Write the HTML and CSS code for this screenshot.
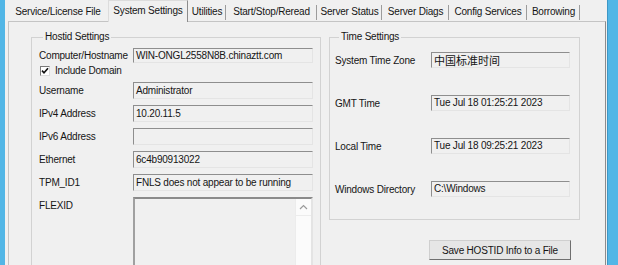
FILE: index.html
```html
<!DOCTYPE html>
<html lang="en">
<head>
  <meta charset="UTF-8">
  <title>LMTOOLS - System Settings</title>
  <link rel="stylesheet" href="styles.css">
</head>
<body>
  <div class="screen">
    <div class="edge-left"></div>

    <div class="window">
      <!-- Tab strip -->
      <div class="tabs">
        <div class="tab tab-service">Service/License File</div>
        <div class="tab tab-system active">System Settings</div>
        <div class="tab tab-utilities">Utilities</div>
        <div class="tab tab-start">Start/Stop/Reread</div>
        <div class="tab tab-status">Server Status</div>
        <div class="tab tab-diags">Server Diags</div>
        <div class="tab tab-config">Config Services</div>
        <div class="tab tab-borrow">Borrowing</div>
      </div>

      <!-- Tab page -->
      <div class="page">
        <fieldset class="group hostid">
          <legend>Hostid Settings</legend>
          <div class="field field-host">
            <span class="label">Computer/Hostname</span>
            <div class="box box-short">WIN-ONGL2558N8B.chinaztt.com</div>
          </div>
          <div class="check-row">
            <span class="checkbox">
              <svg width="8" height="8" viewBox="0 0 8 8"><path d="M1 3.6 L3 5.8 L7 1.2" fill="none" stroke="#111" stroke-width="1.6"/></svg>
            </span>
            <span>Include Domain</span>
          </div>
          <div class="field">
            <span class="label">Username</span>
            <div class="box">Administrator</div>
          </div>
          <div class="field">
            <span class="label">IPv4 Address</span>
            <div class="box">10.20.11.5</div>
          </div>
          <div class="field">
            <span class="label">IPv6 Address</span>
            <div class="box"></div>
          </div>
          <div class="field">
            <span class="label">Ethernet</span>
            <div class="box">6c4b90913022</div>
          </div>
          <div class="field">
            <span class="label">TPM_ID1</span>
            <div class="box">FNLS does not appear to be running</div>
          </div>
          <div class="field field-area">
            <span class="label">FLEXID</span>
            <div class="area">
              <div class="scrollbar">
                <div class="scroll-up">
                  <svg width="9" height="6" viewBox="0 0 9 6"><path d="M1 5 L4.5 1.5 L8 5" fill="none" stroke="#9a9a9a" stroke-width="1.2"/></svg>
                </div>
              </div>
            </div>
          </div>
        </fieldset>

        <div class="right-col">
          <fieldset class="group time">
            <legend>Time Settings</legend>
            <div class="field">
              <span class="label">System Time Zone</span>
              <div class="box cjk">中国标准时间</div>
            </div>
            <div class="field">
              <span class="label">GMT Time</span>
              <div class="box">Tue Jul 18 01:25:21 2023</div>
            </div>
            <div class="field">
              <span class="label">Local Time</span>
              <div class="box">Tue Jul 18 09:25:21 2023</div>
            </div>
            <div class="field">
              <span class="label">Windows Directory</span>
              <div class="box">C:\Windows</div>
            </div>
          </fieldset>
          <button class="save-btn" type="button">Save HOSTID Info to a File</button>
        </div>
      </div>
    </div>

    <div class="edge-right"></div>
  </div>
</body>
</html>
```

FILE: styles.css
```css
body {
  margin: 0;
  background: #f0f0f0;
  font-family: "Liberation Sans", Arial, sans-serif;
  font-size: 10px;
  letter-spacing: -0.2px;
  color: #151515;
}

.screen {
  display: flex;
  width: 618px;
  height: 265px;
  overflow: hidden;
}

/* Blue window frame on both sides */
.edge-left {
  width: 5px;
  background: #52b6e6;
}

.edge-right {
  flex: 1;
  background: #52b6e6;
  border-left: 1px solid #3d97c6;
}

.window {
  width: 602px;
  display: flex;
  flex-direction: column;
  background: #f0f0f0;
}

/* Tabs */
.tabs {
  display: flex;
  height: 21px;
  padding-left: 3px;
}

.tab {
  height: 21px;
  line-height: 23px;
  text-align: center;
  white-space: nowrap;
  box-sizing: border-box;
  background: linear-gradient(#9c9c9c, #9c9c9c) right 5px / 1px 15px no-repeat;
}

.tab.active {
  position: relative;
  z-index: 1;
  height: 22px;
  line-height: 19px;
  border: 1px solid;
  border-color: #dcdcdc #8c8c8c transparent #dcdcdc;
  border-bottom: none;
  background: #f0f0f0;
}

.tab-service { width: 100px; background: none; }
.tab-system { width: 80px; }
.tab-utilities { width: 38px; }
.tab-start { width: 91px; }
.tab-status { width: 65px; }
.tab-diags { width: 67px; }
.tab-config { width: 78px; }
.tab-borrow { width: 53px; }

/* Tab page */
.page {
  flex: 1;
  margin: 0 1px 0 3px;
  padding-left: 22px;
  border: 1px solid;
  border-color: #c4c4c4 #8c8c8c #8c8c8c #c4c4c4;
  display: flex;
  align-items: flex-start;
}

/* Group boxes */
.group {
  margin: 9px 0 0;
  padding: 0;
  border: 1px solid #d2d2d2;
  min-width: 0;
  box-sizing: border-box;
}

.group legend {
  margin-left: 4px;
  padding: 0 2px;
  line-height: 12px;
}

.hostid {
  width: 290px;
  height: 270px;
  padding: 0 6px 0 7px;
}

.time {
  width: 251px;
  padding: 0 8px 22px 5px;
}

.right-col {
  margin-left: 8px;
  display: flex;
  flex-direction: column;
}

.field {
  display: grid;
  align-items: center;
  margin-top: 6px;
}

.hostid .field {
  grid-template-columns: 94px 180px;
}

.time .field {
  grid-template-columns: 96px 139px;
  margin-top: 27px;
}

.time .field:first-of-type {
  margin-top: 9px;
}

.hostid .field-host {
  margin-top: 5px;
}

.label {
  white-space: nowrap;
}

/* Read-only text boxes */
.box {
  height: 17px;
  box-sizing: border-box;
  border: 1px solid;
  border-color: #8e8e8e #e4e4e4 #e4e4e4 #8e8e8e;
  background: #f0f0f0;
  padding-left: 2px;
  line-height: 15px;
  white-space: nowrap;
  overflow: hidden;
}

.time .box {
  height: 16px;
  line-height: 14px;
}

.box-short {
  height: 15px;
  line-height: 13px;
}

.cjk {
  font-family: "Noto Sans CJK SC", sans-serif;
  font-size: 11px;
  letter-spacing: 0;
}

/* Include Domain checkbox */
.check-row {
  display: flex;
  align-items: center;
  gap: 5px;
  margin: 2px 0 0 1px;
  height: 11px;
}

.checkbox {
  width: 10px;
  height: 10px;
  box-sizing: border-box;
  border: 1px solid;
  border-color: #7a7a7a #dcdcdc #dcdcdc #7a7a7a;
  background: #fff;
  display: flex;
  align-items: center;
  justify-content: center;
}

/* FLEXID multi-line box */
.field-area {
  align-items: start;
}

.field-area .label {
  padding-top: 3px;
}

.area {
  height: 120px;
  box-sizing: border-box;
  border: 2px solid;
  border-color: #8a8a8a #e4e4e4 #e4e4e4 #a0a0a0;
  background: #f0f0f0;
  display: flex;
  justify-content: flex-end;
}

.scrollbar {
  width: 15px;
  background: #fbfbfb;
  border-left: 1px solid #ececec;
}

.scroll-up {
  height: 16px;
  display: flex;
  align-items: center;
  justify-content: center;
  border-bottom: 1px solid #ececec;
}

/* Button */
.save-btn {
  margin: 20px 0 0 100px;
  width: 142px;
  height: 20px;
  padding: 0;
  font: inherit;
  letter-spacing: inherit;
  color: #151515;
  background: #e6e6e6;
  border: 1px solid;
  border-color: #cfcfcf #6f6f6f #6f6f6f #cfcfcf;
}
```
